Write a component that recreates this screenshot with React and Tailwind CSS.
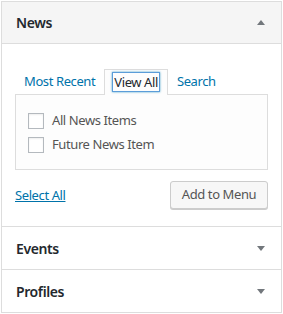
import React from 'react';

const Arrow = ({ up }) => (
    <svg width="8" height="5" viewBox="0 0 8 5" className="block">
        {up ? <polygon points="0,5 8,5 4,0" fill="#72777c" /> : <polygon points="0,0 8,0 4,5" fill="#72777c" />}
    </svg>
);

const SectionHeader = ({ title, up, bg, h }) => (
    <div className={`flex items-center justify-between pl-[14px] pr-[16px] border-b border-[#dddddd] ${h} ${bg}`}>
        <span className="text-[14px] font-semibold text-[#23282d] tracking-[-0.4px]">{title}</span>
        <Arrow up={up} />
    </div>
);

export default function App() {
    const items = ['All News Items', 'Future News Item'];

    return (
        <div className="w-[283px] h-[314px] bg-white tracking-[-0.4px]" style={{ fontFamily: '"Noto Sans", "Open Sans", sans-serif' }}>
            <div className="ml-[1px] mt-[1px] w-[281px] border-x border-t border-[#dddddd]">
                <SectionHeader title="News" up bg="bg-[#f5f5f5]" h="h-[42px]" />

                <div className="h-[183px] px-[13px] pt-[25px] border-b border-[#dddddd]">
                    <div className="flex items-end text-[13px] text-[#0073aa]">
                        <span className="px-[9px] h-[25px] leading-[25px]">Most Recent</span>
                        <span className="h-[26px] px-[7px] pt-[2px] -mb-px border border-b-0 border-[#dddddd] bg-[#fdfdfd] relative z-10">
                            <span className="block h-[20px] leading-[18px] px-[1px] border border-[#5b9dd9] shadow-[0_0_2px_rgba(30,140,190,0.8)] text-[#23282d]">View All</span>
                        </span>
                        <span className="px-[9px] h-[25px] leading-[25px]">Search</span>
                    </div>

                    <div className="h-[76px] border border-[#dddddd] bg-[#fdfdfd] pt-[18px] pl-[12px] flex flex-col gap-[8px]">
                        {items.map(item => (
                            <label key={item} className="flex items-center h-[16px]">
                                <span className="w-[16px] h-[16px] border border-[#b4b9be] bg-white shadow-[inset_0_1px_2px_rgba(0,0,0,0.07)]" />
                                <span className="ml-[8px] text-[13px] text-[#555555]">{item}</span>
                            </label>
                        ))}
                    </div>

                    <div className="flex items-center justify-between mt-[11px]">
                        <a className="text-[13px] text-[#0073aa] underline mt-[2px]">Select All</a>
                        <button className="h-[28px] w-[98px] text-[13px] text-[#555555] bg-[#f7f7f7] border border-[#cccccc] rounded-[3px] shadow-[0_1px_0_#cccccc]">
                            Add to Menu
                        </button>
                    </div>
                </div>

                <SectionHeader title="Events" bg="bg-white" h="h-[43px]" />
                <SectionHeader title="Profiles" bg="bg-white" h="h-[43px]" />
            </div>
        </div>
    );
}
